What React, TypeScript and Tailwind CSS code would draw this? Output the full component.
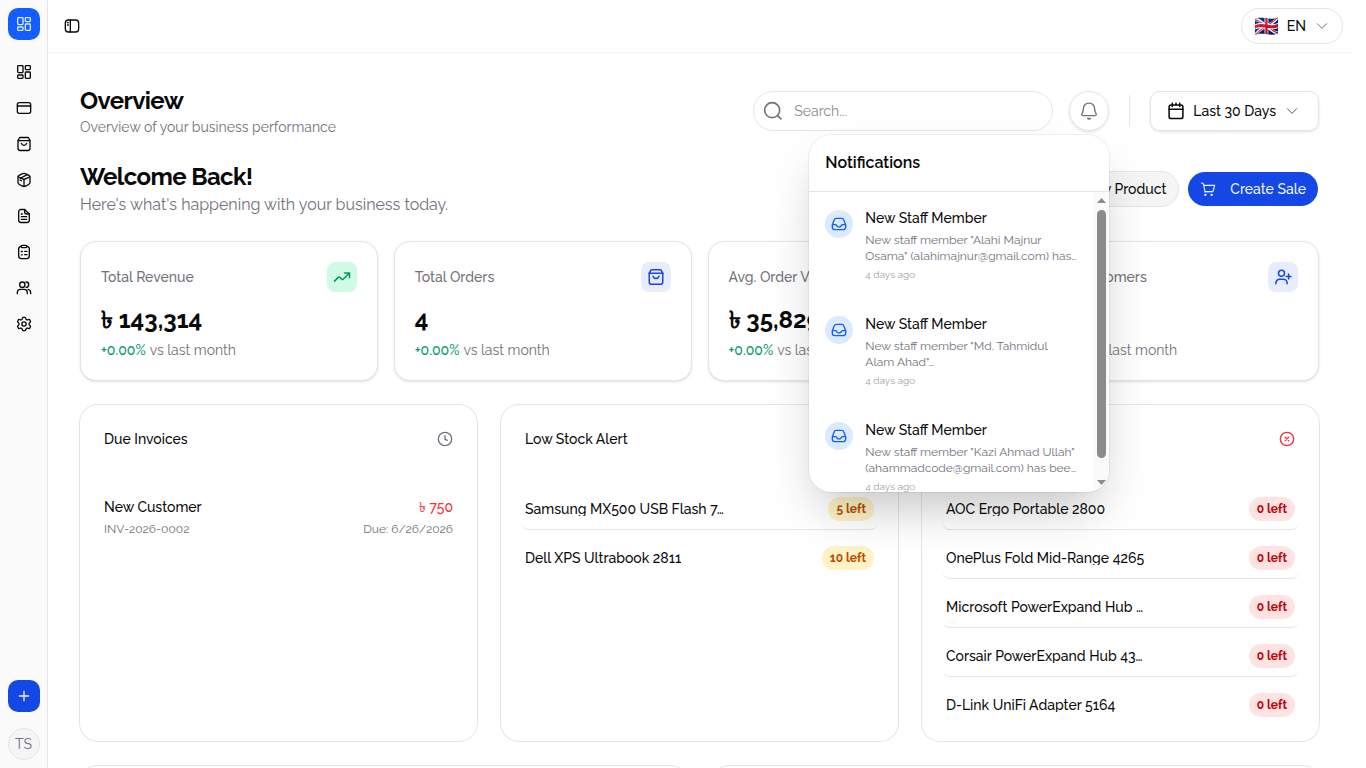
import type { ReactNode } from "react";

type IconProps = { className?: string };

function Icon({ className = "size-4", weight = 2, children }: { className?: string; weight?: number; children: ReactNode }) {
  return (
    <svg
      viewBox="0 0 24 24"
      fill="none"
      stroke="currentColor"
      strokeWidth={weight}
      strokeLinecap="round"
      strokeLinejoin="round"
      aria-hidden="true"
      className={`shrink-0 ${className}`}
    >
      {children}
    </svg>
  );
}

const DashboardIcon = (p: IconProps) => (
  <Icon {...p}>
    <rect x="2.5" y="2.5" width="8" height="10.5" rx="1.2" />
    <rect x="14" y="2.5" width="7.500" height="6" rx="1.2" />
    <rect x="2.5" y="16.500" width="8" height="5" rx="1.2" />
    <rect x="14" y="12" width="7.500" height="9.500" rx="1.2" />
  </Icon>
);
const CardIcon = (p: IconProps) => (
  <Icon {...p}>
    <rect x="2" y="4" width="20" height="16" rx="3" />
    <path d="M2 9h20" />
  </Icon>
);
const BagIcon = (p: IconProps) => (
  <Icon {...p}>
    <path d="M3 6.5v12a3.2 3.2 0 0 0 3.2 3.2h11.6a3.2 3.2 0 0 0 3.2-3.2v-12" />
    <path d="M3 7l1.8-3.6A2 2 0 0 1 6.6 2.300h10.800a2 2 0 0 1 1.800 1.100L21 7z" />
    <path d="M8 11c.6 1.800 2.100 3 4 3s3.400-1.200 4-3" />
  </Icon>
);
const PackageIcon = (p: IconProps) => (
  <Icon {...p}>
    <path d="M12 22c-.8 0-1.600-.3-3.100-1.100C5 19 3 18 3 16.300V7.500M12 22c.8 0 1.600-.3 3.100-1.100C19 19 21 18 21 16.300V7.500M12 22V11.500" />
    <path d="M8.300 9.700 5.400 8.300C3.800 7.500 3 7.100 3 6.500s.8-1 2.400-1.800l2.900-1.400C10.100 2.400 11 2 12 2s1.900.4 3.700 1.300l2.900 1.400C20.200 5.500 21 5.900 21 6.500s-.8 1-2.400 1.800l-2.900 1.400c-1.800.9-2.700 1.300-3.700 1.300s-1.900-.4-3.700-1.300Z" />
    <path d="M6 12l2 1M17 4 7 9" />
  </Icon>
);
const FileIcon = (p: IconProps) => (
  <Icon {...p}>
    <path d="M4 5.500A3.200 3.200 0 0 1 7.200 2.300H13L20 9v9.500a3.200 3.200 0 0 1-3.200 3.200H7.200A3.200 3.200 0 0 1 4 18.500z" />
    <path d="M13 2.500V6a3 3 0 0 0 3 3h3.800M8 17h8M8 13h8M8 9h1.500" />
  </Icon>
);
const ClipboardIcon = (p: IconProps) => (
  <Icon {...p}>
    <path d="M7.500 3.500C5 3.600 4 4.500 4 7.500v10.300C4 21 5 22 8 22h8c3 0 4-1 4-4.200V7.500c0-3-1-3.900-3.500-4" />
    <rect x="7.500" y="2" width="9" height="3.500" rx="1.700" />
    <path d="M13 11h3.500M13 16h3.500M8 11.200h1.500M8 16.200h1.500" />
  </Icon>
);
const UsersIcon = (p: IconProps) => (
  <Icon {...p}>
    <circle cx="9.500" cy="7" r="4" />
    <path d="M2 20.500v-1.500a5 5 0 0 1 5-5h5a5 5 0 0 1 5 5v1.500M15 3a4 4 0 0 1 0 8M18 14c2.500.4 4 2.200 4 5v1.500" />
  </Icon>
);
const SettingsIcon = (p: IconProps) => (
  <Icon {...p}>
    <path d="M21.318 7.141l-.493-.856c-.373-.648-.56-.972-.877-1.100-.318-.13-.676-.028-1.394.176l-1.219.343a2 2 0 0 1-1.350-.170l-.337-.194a2 2 0 0 1-.788-.967l-.334-.998c-.220-.660-.330-.991-.591-1.180C13.674 2 13.327 2 12.634 2h-1.113c-.693 0-1.040 0-1.301.189-.261.189-.371.519-.590 1.180l-.334.997a2 2 0 0 1-.788.967l-.337.195a2 2 0 0 1-1.350.169L5.602 5.360c-.718-.203-1.077-.305-1.394-.176-.317.130-.504.453-.877 1.101l-.493.856c-.35.608-.525.911-.491 1.234.034.324.268.584.737 1.105l1.030 1.152c.252.319.430.874.430 1.374 0 .500-.179 1.055-.430 1.374L3.084 14.530c-.469.521-.703.781-.737 1.105-.034.323.141.627.491 1.234l.493.856c.373.648.560.972.877 1.100.317.130.676.028 1.394-.176l1.219-.342a2 2 0 0 1 1.350.169l.337.194a2 2 0 0 1 .788.968l.334.997c.219.661.329.991.590 1.180.261.189.608.189 1.301.189h1.113c.693 0 1.040 0 1.301-.189.261-.189.371-.519.591-1.180l.334-.997a2 2 0 0 1 .788-.968l.337-.194a2 2 0 0 1 1.350-.169l1.219.342c.718.204 1.076.306 1.394.176.317-.129.504-.452.877-1.100l.493-.856c.35-.608.525-.911.491-1.234-.034-.324-.268-.584-.737-1.105l-1.030-1.152c-.252-.319-.430-.874-.430-1.374 0-.5.178-1.055.430-1.374l1.030-1.151c.469-.522.703-.783.737-1.106.034-.323-.141-.627-.491-1.234Z" />
    <circle cx="12" cy="12" r="3.200" />
  </Icon>
);
const SidebarToggleIcon = (p: IconProps) => (
  <Icon {...p}>
    <rect x="2" y="3" width="20" height="18" rx="4.500" />
    <path d="M9.500 3v18M5.200 7h1.200M5.200 10.500h1.200" />
  </Icon>
);
const ChevronIcon = (p: IconProps) => (
  <Icon weight={1.5} {...p}>
    <path d="m5 8.500 7 7 7-7" />
  </Icon>
);
const SearchIcon = (p: IconProps) => (
  <Icon {...p}>
    <circle cx="11" cy="11" r="9" />
    <path d="m17.500 17.500 4 4" />
  </Icon>
);
const BellIcon = (p: IconProps) => (
  <Icon weight={1.7} {...p}>
    <path d="M5.200 9.500C5.100 5.500 8 2.500 12 2.500s6.900 3 6.800 7c0 2.800.5 3.600 1.500 5.300.5.900.9 2.700-1.100 2.700H4.800c-2 0-1.600-1.800-1.100-2.700 1-1.700 1.500-2.500 1.500-5.300Z" />
    <path d="M10.500 21a2 2 0 0 0 3 0z" fill="currentColor" />
  </Icon>
);
const CalendarIcon = (p: IconProps) => (
  <Icon {...p}>
    <rect x="2.800" y="4" width="18.400" height="18" rx="2.500" />
    <path d="M2.800 9.500h18.400M7 1.500V6M17 1.500V6M12 1.500V4" />
  </Icon>
);
const CartIcon = (p: IconProps) => (
  <Icon weight={1.7} {...p}>
    <path d="M2 3h1.200c1 0 1.800.7 2 1.700L7.500 16M5.700 6.500H22l-2 7.400a2.500 2.500 0 0 1-2.300 1.900L7.500 16.200" />
    <path d="M7.500 16.200H19" />
    <circle cx="8" cy="20.800" r="1" />
    <circle cx="17.500" cy="20.800" r="1" />
  </Icon>
);
const InboxIcon = (p: IconProps) => (
  <Icon {...p}>
    <path d="M2 13.500V17a3.500 3.500 0 0 0 3.500 3.500h13A3.500 3.500 0 0 0 22 17v-3.500L19.300 6a3.500 3.500 0 0 0-3.300-2.500H8A3.500 3.500 0 0 0 4.700 6z" />
    <path d="M2.200 13h4.300c.9 0 1.600.6 2 1.400a3.900 3.900 0 0 0 7 0c.4-.8 1.100-1.400 2-1.400h4.300" />
  </Icon>
);
const TrendIcon = (p: IconProps) => (
  <Icon {...p}>
    <path d="m2 17.500 5-5a1.500 1.500 0 0 1 2.100 0l2.400 2.400a1.500 1.500 0 0 0 2.100 0L21.500 7M15.500 6.500H22V13" />
  </Icon>
);
const UserAddIcon = (p: IconProps) => (
  <Icon {...p}>
    <circle cx="10" cy="7" r="4" />
    <path d="M2.500 21v-1a5 5 0 0 1 5-5h5a5 5 0 0 1 5 5v1M19.500 8v6.500M16.200 11.200h6.500" />
  </Icon>
);
const ClockIcon = (p: IconProps) => (
  <Icon {...p}>
    <circle cx="12" cy="12" r="10" />
    <path d="M12 7v5.500l3.500 1.500" />
  </Icon>
);
const CancelIcon = (p: IconProps) => (
  <Icon {...p}>
    <circle cx="12" cy="12" r="10" />
    <path d="m9.200 9.200 5.600 5.600M14.800 9.200l-5.600 5.600" />
  </Icon>
);
const AlertIcon = (p: IconProps) => (
  <Icon {...p}>
    <circle cx="12" cy="12" r="10" />
    <path d="M12 8v4.500M12 16v.1" />
  </Icon>
);
const PlusIcon = (p: IconProps) => (
  <Icon {...p}>
    <path d="M12 5v14M5 12h14" />
  </Icon>
);

const navItems = [
  { label: "Overview", Glyph: DashboardIcon },
  { label: "Point of sale", Glyph: CardIcon },
  { label: "Orders", Glyph: BagIcon },
  { label: "Products", Glyph: PackageIcon },
  { label: "Invoices", Glyph: FileIcon },
  { label: "Reports", Glyph: ClipboardIcon },
  { label: "Staff", Glyph: UsersIcon },
  { label: "Settings", Glyph: SettingsIcon },
];

const stats = [
  { label: "Total Revenue", value: "৳ 143,314", Glyph: TrendIcon, tone: "bg-emerald-100 text-emerald-600" },
  { label: "Total Orders", value: "4", Glyph: BagIcon, tone: "bg-[#e8edfd] text-blue-700" },
  { label: "Avg. Order Value", value: "৳ 35,829", Glyph: TrendIcon, tone: "bg-emerald-100 text-emerald-600" },
  { label: "New Customers", value: "1", Glyph: UserAddIcon, tone: "bg-[#e8edfd] text-blue-700" },
];

const lowStock = [
  { name: "Samsung MX500 USB Flash 7…", left: 5 },
  { name: "Dell XPS Ultrabook 2811", left: 10 },
];

const outOfStock = [
  { name: "AOC Ergo Portable 2800", left: 0 },
  { name: "OnePlus Fold Mid-Range 4265", left: 0 },
  { name: "Microsoft PowerExpand Hub …", left: 0 },
  { name: "Corsair PowerExpand Hub 43…", left: 0 },
  { name: "D-Link UniFi Adapter 5164", left: 0 },
];

const notifications = [
  ['New staff member "Alahi Majnur', "Osama\" (alahimajnur@gmail.com) has…"],
  ['New staff member "Md. Tahmidul', 'Alam Ahad"…'],
  ['New staff member "Kazi Ahmad Ullah"', "(ahammadcode@gmail.com) has bee…"],
];

function Sidebar() {
  return (
    <aside className="flex w-12 shrink-0 flex-col items-center justify-between border-r border-neutral-200 bg-neutral-50 py-2">
      <div className="flex flex-col items-center gap-4">
        <a href="#home" aria-label="Home" className="flex size-8 items-center justify-center rounded-[10px] bg-blue-600 text-blue-100">
          <DashboardIcon />
        </a>
        <nav className="flex flex-col gap-1">
          {navItems.map(({ label, Glyph }) => (
            <a key={label} href={`#${label}`} aria-label={label} className="flex size-8 items-center justify-center rounded-lg">
              <Glyph />
            </a>
          ))}
        </nav>
      </div>
      <div className="flex flex-col items-center gap-4">
        <button type="button" aria-label="Quick create" className="flex size-8 items-center justify-center rounded-[10px] bg-blue-700 text-blue-50">
          <PlusIcon />
        </button>
        <button type="button" className="flex size-8 items-center justify-center rounded-full border border-neutral-200 bg-neutral-100 text-sm text-[#71717b]">
          TS
        </button>
      </div>
    </aside>
  );
}

function Notifications() {
  return (
    <section
      aria-label="Notifications"
      className="absolute top-full right-0 z-10 mt-1 w-[300px] overflow-hidden rounded-[22px] bg-white shadow-2xl ring-1 ring-black/5"
    >
      <h2 className="border-b border-neutral-200 p-4 text-base font-semibold">Notifications</h2>
      <div className="flex h-[300px] overflow-hidden">
        <ul className="min-w-0 grow">
          {notifications.map(([first, second]) => (
            <li key={first} className="flex gap-3 p-4">
              <span className="mt-0.5 flex size-7 shrink-0 items-center justify-center rounded-full bg-blue-100 text-blue-600">
                <InboxIcon />
              </span>
              <div className="min-w-0">
                <p className="text-sm font-medium">New Staff Member</p>
                <p className="mt-1 text-xs whitespace-nowrap text-[#71717b]">
                  {first}
                  <br />
                  {second}
                </p>
                <p className="mt-1 text-[10px] leading-[14px] text-[#a1a1aa]">4 days ago</p>
              </div>
            </li>
          ))}
        </ul>
        <div aria-hidden="true" className="flex w-[15px] shrink-0 flex-col items-center justify-between bg-neutral-50 pt-1.5 pb-[7px] text-[#8b8b8b]">
          <svg viewBox="0 0 9 5" className="h-[5px] w-[9px]" fill="currentColor">
            <path d="M0 5 4.500 0 9 5z" />
          </svg>
          <div className="mt-[7px] h-[248px] w-[9px] rounded-full bg-[#8b8b8b]" />
          <div className="grow" />
          <svg viewBox="0 0 9 5" className="h-[5px] w-[9px]" fill="currentColor">
            <path d="M0 0 4.500 5 9 0z" />
          </svg>
        </div>
      </div>
    </section>
  );
}

function Panel({ title, icon, children }: { title: string; icon: ReactNode; children: ReactNode }) {
  return (
    <section className="min-h-84 rounded-[18px] bg-white px-6 pt-6 pb-4 ring-1 ring-neutral-200">
      <div className="flex items-center justify-between">
        <h3 className="text-sm font-medium">{title}</h3>
        {icon}
      </div>
      <div className="mt-10">{children}</div>
    </section>
  );
}

function StockList({ items, tone }: { items: { name: string; left: number }[]; tone: string }) {
  return (
    <ul className="-mx-1 flex flex-col gap-2">
      {items.map((item) => (
        <li
          key={item.name}
          className="flex items-center justify-between rounded-lg border-b border-neutral-200 px-1 py-2 last:border-b-0"
        >
          <span className="truncate text-sm leading-none font-medium">{item.name}</span>
          <span className={`flex h-6 items-center rounded-full px-2 text-xs font-bold ${tone}`}>{item.left} left</span>
        </li>
      ))}
    </ul>
  );
}

export default function App() {
  return (
    <div className="flex h-screen overflow-hidden bg-white font-['Raleway','Noto_Sans',sans-serif] text-[#09090b]">
      <Sidebar />
      <div className="mr-[15px] min-w-0 grow">
        <header className="flex items-center justify-between border-b border-neutral-100 py-2 pr-2 pl-2.5">
          <button type="button" aria-label="Toggle sidebar" className="flex size-7 items-center justify-center">
            <SidebarToggleIcon />
          </button>
          <button type="button" className="flex h-9 items-center gap-2 rounded-full border border-neutral-200 px-3 text-sm font-medium">
            <span className="text-xl">🇬🇧</span>
            EN
            <ChevronIcon className="size-4 text-[#71717b]" />
          </button>
        </header>

        <main className="flex flex-col gap-6 p-8">
          <div className="flex items-center justify-between">
            <div>
              <h1 className="text-2xl font-bold tracking-tight">Overview</h1>
              <p className="text-sm text-[#71717b]">Overview of your business performance</p>
            </div>
            <div className="flex items-center">
              <label className="flex h-10 w-[300px] items-center rounded-full border border-neutral-200 px-[9px] text-[#71717b]">
                <SearchIcon className="size-5" />
                <input
                  type="search"
                  aria-label="Search"
                  placeholder="Search..."
                  className="ml-[11px] min-w-0 grow bg-transparent text-sm outline-none placeholder:text-[#8b8b93]"
                />
              </label>
              <div className="relative ml-4">
                <button
                  type="button"
                  aria-label="Show notifications"
                  className="flex size-10 items-center justify-center rounded-full border border-neutral-200 text-[#71717b] shadow-sm"
                >
                  <BellIcon className="size-5" />
                </button>
                <Notifications />
              </div>
              <div className="mx-5 h-8 w-px bg-neutral-200" />
              <button
                type="button"
                className="flex h-10 items-center gap-2 rounded-[10px] border border-neutral-200 pr-[18px] pl-4 text-sm font-medium shadow-sm"
              >
                <CalendarIcon className="size-[18px]" />
                Last 30 Days
                <ChevronIcon className="size-4 text-[#52525c]" />
              </button>
            </div>
          </div>

          <div className="flex items-center justify-between">
            <div>
              <h2 className="text-2xl font-bold tracking-tight">Welcome Back!</h2>
              <p className="text-base text-[#71717b]">Here's what's happening with your business today.</p>
            </div>
            <div className="flex gap-2">
              <button
                type="button"
                className="flex h-9 items-center gap-3.5 rounded-full border border-neutral-200 bg-neutral-100 px-3 text-sm font-medium"
              >
                <PlusIcon />
                New Product
              </button>
              <button
                type="button"
                className="flex h-9 items-center gap-3.5 rounded-full border border-transparent bg-blue-700 bg-clip-padding px-3 text-sm font-medium text-blue-50"
              >
                <CartIcon />
                Create Sale
              </button>
            </div>
          </div>

          <div className="grid grid-cols-4 gap-4">
            {stats.map(({ label, value, Glyph, tone }) => (
              <section key={label} className="rounded-2xl border border-neutral-200 bg-white p-5 shadow-sm">
                <div className="flex items-center justify-between">
                  <h3 className="text-sm font-medium text-[#71717b]">{label}</h3>
                  <span className={`flex size-[30px] items-center justify-center rounded-lg ${tone}`}>
                    <Glyph className="size-[18px]" />
                  </span>
                </div>
                <p className="mt-3 text-2xl font-bold">{value}</p>
                <p className="mt-1 flex gap-1 text-sm text-[#71717b]">
                  <span className="font-medium text-emerald-600">+0.00%</span>
                  <span>vs last month</span>
                </p>
              </section>
            ))}
          </div>

          <div className="grid grid-cols-3 gap-6">
            <Panel title="Due Invoices" icon={<ClockIcon className="size-4 text-[#71717b]" />}>
              <div className="flex justify-between py-2">
                <div className="flex flex-col gap-1">
                  <p className="text-sm font-medium">New Customer</p>
                  <p className="text-xs text-[#71717b]">INV-2026-0002</p>
                </div>
                <div className="flex flex-col gap-1 text-right">
                  <p className="text-sm font-medium text-[#fb2c36]">৳ 750</p>
                  <p className="text-xs text-[#71717b]">Due: 6/26/2026</p>
                </div>
              </div>
            </Panel>
            <Panel title="Low Stock Alert" icon={<AlertIcon className="size-4 text-amber-500" />}>
              <StockList items={lowStock} tone="bg-amber-100 text-amber-700" />
            </Panel>
            <Panel title="Out of Stock" icon={<CancelIcon className="size-4 text-[#fb2c36]" />}>
              <StockList items={outOfStock} tone="bg-red-100 text-red-700" />
            </Panel>
          </div>

          <div className="grid grid-cols-2 gap-6">
            <section aria-label="Sales" className="h-80 rounded-2xl border border-neutral-200" />
            <section aria-label="Top products" className="h-80 rounded-2xl border border-neutral-200" />
          </div>
        </main>
      </div>
    </div>
  );
}
